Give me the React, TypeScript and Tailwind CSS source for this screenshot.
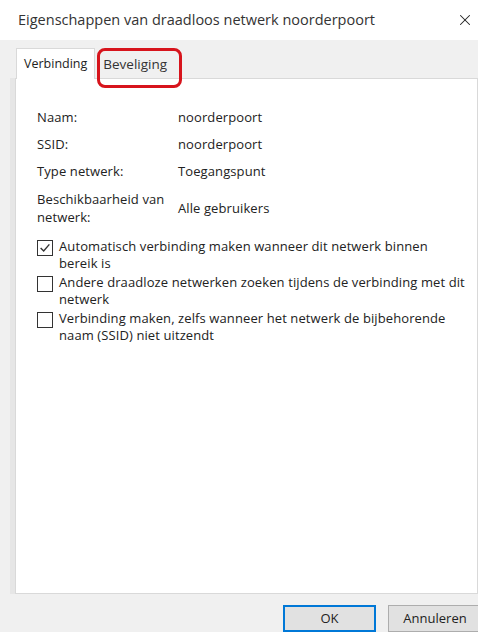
import { X } from "lucide-react";

const font = { fontFamily: '"Open Sans", "Noto Sans", sans-serif' };

const rows = [
  { label: "Naam:", value: "noorderpoort" },
  { label: "SSID:", value: "noorderpoort" },
  { label: "Type netwerk:", value: "Toegangspunt" },
];

const options = [
  { checked: true, lines: ["Automatisch verbinding maken wanneer dit netwerk binnen", "bereik is"] },
  { checked: false, lines: ["Andere draadloze netwerken zoeken tijdens de verbinding met dit", "netwerk"] },
  { checked: false, lines: ["Verbinding maken, zelfs wanneer het netwerk de bijbehorende", "naam (SSID) niet uitzendt"] },
];

function CheckBox({ checked }: { checked: boolean }) {
  return (
    <div className="w-[16px] h-[16px] mt-[2px] shrink-0 border border-[#333] bg-white flex items-center justify-center">
      {checked && (
        <svg width="12" height="12" viewBox="0 0 11 11">
          <path d="M1.5 5.5 L4.3 8.3 L9.5 2.2" fill="none" stroke="#333" strokeWidth="1.3" />
        </svg>
      )}
    </div>
  );
}

export default function App() {
  return (
    <div className="w-[478px] h-[632px] overflow-hidden bg-[#f0f0f0] text-[#222]" style={font}>
      {/* title bar */}
      <div className="h-[40px] bg-white flex items-center justify-between pl-[18px] pr-[4px]">
        <span className="text-[14.5px] text-[#333]">
          Eigenschappen van draadloos netwerk noorderpoort
        </span>
        <X className="w-[18px] h-[18px] text-[#222]" strokeWidth={1.4} />
      </div>

      {/* tabs */}
      <div className="relative flex items-end h-[38px] pl-[16px]">
        <div className="h-[31px] px-[7px] bg-white border border-b-0 border-[#d9d9d9] flex items-center text-[12.5px] relative z-10 -mb-px">
          Verbinding
        </div>
        <div className="h-[27px] px-[7px] ml-[1px] flex items-center text-[13.5px] text-[#333]">
          Beveliging
        </div>
        <div className="absolute left-[97px] top-[8px] w-[85px] h-[40px] rounded-lg border-[3px] border-[#d7141c] z-20" />
      </div>

      {/* panel */}
      <div className="ml-[10px] border-l-[5px] border-[#e6e6e6]">
        <div className="h-[516px] bg-white border border-[#d9d9d9] pt-[30px] pl-[21px] pr-[4px] text-[13px] tracking-[0.1px]">
          <div className="flex flex-col gap-[10px]">
            {rows.map((r) => (
              <div key={r.label} className="flex leading-[17px]">
                <span className="w-[141px]">{r.label}</span>
                <span>{r.value}</span>
              </div>
            ))}
            <div className="flex items-center leading-[18px]">
              <span className="w-[141px]">
                Beschikbaarheid van
                <br />
                netwerk:
              </span>
              <span>Alle gebruikers</span>
            </div>
          </div>

          <div className="mt-[12px] flex flex-col gap-[2px]">
            {options.map((o, i) => (
              <div key={i} className="flex gap-[6px] leading-[17px] whitespace-nowrap">
                <CheckBox checked={o.checked} />
                <span>
                  {o.lines[0]}
                  <br />
                  {o.lines[1]}
                </span>
              </div>
            ))}
          </div>
        </div>
      </div>

      {/* buttons */}
      <div className="flex justify-end gap-[12px] mt-[11px] -mr-[4px] text-[13px]">
        <div className="w-[93px] h-[27px] bg-[#e1e1e1] border-2 border-[#0078d7] flex items-center justify-center">
          OK
        </div>
        <div className="w-[94px] h-[27px] bg-[#e1e1e1] border border-[#adadad] flex items-center justify-center">
          Annuleren
        </div>
      </div>
    </div>
  );
}
